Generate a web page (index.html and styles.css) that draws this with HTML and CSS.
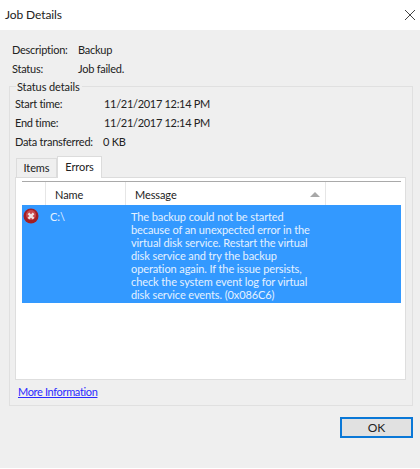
FILE: index.html
```html
<!DOCTYPE html>
<html lang="en">
<head>
<meta charset="utf-8">
<title>Job Details</title>
<link rel="stylesheet" href="styles.css">
</head>
<body>
<div class="window">
  <header class="titlebar">
    <span class="title">Job Details</span>
    <svg class="close" width="12" height="12" viewBox="0 0 12 12"><path d="M1 1 L11 11 M11 1 L1 11" stroke="#444" stroke-width="1" fill="none"/></svg>
  </header>
  <main class="content">
    <div class="summary">
      <span>Description:</span><span class="summary-a">Backup</span>
      <span>Status:</span><span>Job failed.</span>
    </div>
    <section class="group">
      <div class="legend">Status details</div>
      <div class="details">
        <span>Start time:</span><span class="value">11/21/2017 12:14 PM</span>
        <span>End time:</span><span class="value">11/21/2017 12:14 PM</span>
        <span>Data transferred:</span><span class="value-b">0 KB</span>
      </div>
      <div class="tabs">
        <div class="tab">Items</div>
        <div class="tab active">Errors</div>
      </div>
      <div class="panel">
        <div class="list">
          <div class="list-head">
            <div class="col-icon"></div>
            <div class="col-name">Name</div>
            <div class="col-msg">Message<span class="sort"></span></div>
            <div class="col-rest"></div>
          </div>
          <div class="list-row">
            <div class="cell-icon">
              <svg width="16" height="16" viewBox="0 0 16 16">
                <circle cx="8" cy="8" r="7.5" fill="#a31f24"/>
                <circle cx="8" cy="7" r="5" fill="#c8484c"/>
                <path d="M5.4 5.4 L10.6 10.6 M10.6 5.4 L5.4 10.6" stroke="#f0e4e4" stroke-width="2.2" fill="none"/>
              </svg>
            </div>
            <div class="cell-name">C:\</div>
            <div class="cell-msg">The backup could not be started<br>because of an unexpected error in the<br>virtual disk service. Restart the virtual<br>disk service and try the backup<br>operation again. If the issue persists,<br>check the system event log for virtual<br>disk service events. (0x086C6)</div>
          </div>
        </div>
      </div>
      <a class="more" href="#">More Information</a>
    </section>
    <div class="actions"><button class="ok" type="button">OK</button></div>
  </main>
</div>
</body>
</html>
```
FILE: styles.css
```css
* { box-sizing: border-box; }
html, body { margin: 0; padding: 0; background: #fff; }
body { font-family: "Lato", "Open Sans", sans-serif; font-size: 11px; letter-spacing: -0.1px; color: #222; }
.window { width: 420px; height: 469px; display: flex; flex-direction: column; }
.titlebar { height: 30px; flex: none; background: #fff; display: flex; align-items: center; justify-content: space-between; padding: 0 4px 1px 5px; }
.title { font-size: 12px; color: #222; }
.content { height: 438px; flex: none; background: #efefef; padding: 10px 7px 0 9px; display: flex; flex-direction: column; }
.summary { display: grid; grid-template-columns: 66px 1fr; grid-auto-rows: 19px; padding-left: 3px; align-items: center; letter-spacing: -0.25px; }
.group { margin-top: 8px; height: 320px; border: 1px solid #e0e0e0; position: relative; padding: 7px 7px 0 5px; }
.legend { position: absolute; top: -7px; left: 6px; background: #efefef; padding: 0 2px 0 1px; line-height: 14px; }
.details { display: grid; grid-template-columns: 89px 1fr; grid-auto-rows: 19px; align-items: center; letter-spacing: -0.25px; }
.value { letter-spacing: -0.3px; }
.value-b { margin-left: -1px; }
.tabs { display: flex; align-items: flex-end; height: 22px; margin-top: 4px; padding-left: 1px; }
.tab { height: 19px; width: 41px; background: #efefef; border: 1px solid #dcdcdc; border-bottom: 0; text-align: center; line-height: 18px; }
.tab.active { height: 22px; width: 45px; background: #fff; line-height: 19px; margin-bottom: -1px; position: relative; z-index: 1; }
.panel { height: 203px; width: 391px; background: #fff; border: 1px solid #dedede; border-top-color: #dcdcdc; padding: 3px 4px 0 6px; }
.list { border-top: 1px solid #a9a9a9; }
.list-head { display: flex; height: 23px; line-height: 25px; }
.list-head > div { border-right: 1px solid #e6e6e6; }
.col-icon { width: 24px; }
.col-name { width: 80px; padding-left: 9px; }
.col-msg { width: 200px; padding-left: 9px; position: relative; }
.col-rest { flex: 1; border-right: 0 !important; }
.sort { position: absolute; right: 5px; top: 10px; width: 0; height: 0; border-left: 5px solid transparent; border-right: 5px solid transparent; border-bottom: 5px solid #a8a8a8; }
.list-row { display: flex; height: 98px; background: #3399ff; color: #e4f1ff; }
.cell-icon { width: 24px; padding: 3px 0 0 1px; }
.cell-icon svg { display: block; }
.cell-name { width: 80px; padding: 5px 0 0 4px; line-height: 13px; }
.cell-msg { flex: 1; padding: 5px 0 0 5px; line-height: 13px; white-space: nowrap; }
.more { display: block; width: max-content; margin: 5px 0 0 3px; color: #2a2aff; line-height: 14px; letter-spacing: -0.35px; text-decoration: underline; }
.actions { display: flex; justify-content: flex-end; margin-top: 11px; }
.ok { width: 73px; height: 21px; margin: 0; padding: 0; background: #e1e1e1; border: 2px solid #0a78d7; font: inherit; font-size: 12px; color: #222; }
```
